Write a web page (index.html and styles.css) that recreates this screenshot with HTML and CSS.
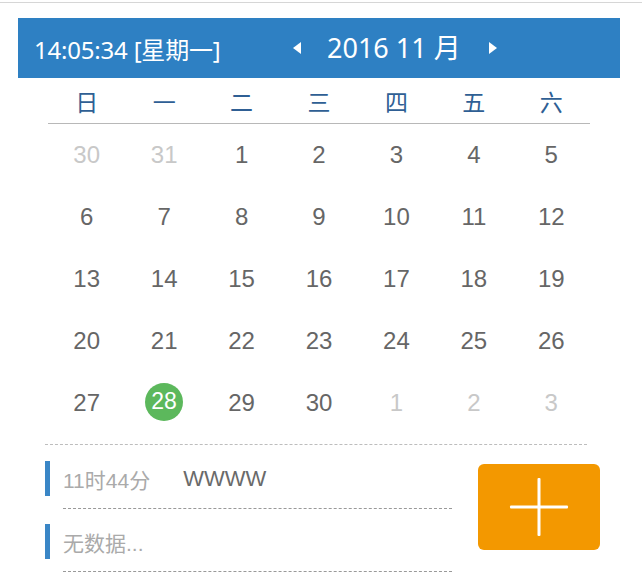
FILE: index.html
```html
<!DOCTYPE html>
<html lang="zh-CN">
<head>
<meta charset="utf-8">
<title>日历</title>
<link rel="stylesheet" href="styles.css">
</head>
<body>
<div class="page">
  <header class="cal-header">
    <div class="clock">14:05:34 [星期一]</div>
    <div class="nav">
      <span class="arrow arrow-left"></span>
      <span class="month">2016 11 月</span>
      <span class="arrow arrow-right"></span>
    </div>
  </header>
  <div class="calendar">
    <div class="weekdays">
      <span>日</span><span>一</span><span>二</span><span>三</span><span>四</span><span>五</span><span>六</span>
    </div>
    <div class="days">
      <span class="day other">30</span><span class="day other">31</span><span class="day">1</span><span class="day">2</span><span class="day">3</span><span class="day">4</span><span class="day">5</span>
      <span class="day">6</span><span class="day">7</span><span class="day">8</span><span class="day">9</span><span class="day">10</span><span class="day">11</span><span class="day">12</span>
      <span class="day">13</span><span class="day">14</span><span class="day">15</span><span class="day">16</span><span class="day">17</span><span class="day">18</span><span class="day">19</span>
      <span class="day">20</span><span class="day">21</span><span class="day">22</span><span class="day">23</span><span class="day">24</span><span class="day">25</span><span class="day">26</span>
      <span class="day">27</span><span class="day today"><span class="dot">28</span></span><span class="day">29</span><span class="day">30</span><span class="day other">1</span><span class="day other">2</span><span class="day other">3</span>
    </div>
  </div>
  <div class="separator"></div>
  <div class="events">
    <div class="event-list">
      <div class="item">
        <div class="item-head">
          <span class="bar"></span>
          <span class="time">11时44分</span>
          <span class="title">WWWW</span>
        </div>
        <div class="item-line"></div>
      </div>
      <div class="item">
        <div class="item-head">
          <span class="bar"></span>
          <span class="time">无数据...</span>
        </div>
        <div class="item-line"></div>
      </div>
    </div>
    <button class="add-btn" type="button" aria-label="添加">
      <svg width="60" height="60" viewBox="0 0 60 60">
        <rect x="1" y="28.5" width="58" height="3" rx="1" fill="#fff"/>
        <rect x="28.5" y="1" width="3" height="58" rx="1" fill="#fff"/>
      </svg>
    </button>
  </div>
</div>
</body>
</html>
```

FILE: styles.css
```css
html, body {
  margin: 0;
  padding: 0;
  background: #fff;
}

body {
  padding-top: 2px;
  font-family: "Liberation Sans", Arial, "Noto Sans CJK SC", sans-serif;
}

.page {
  border-top: 1px solid #d6d6d6;
  padding: 15px 22px 0 18px;
}

.cal-header {
  height: 60px;
  background: #2e80c3;
  color: #fff;
  display: grid;
  grid-template-columns: 259px auto;
  align-items: center;
  padding-left: 16px;
  font-family: "Noto Sans", "Open Sans", "Noto Sans CJK SC", sans-serif;
}

.clock {
  font-size: 24px;
  white-space: nowrap;
  letter-spacing: -0.2px;
}

.nav {
  display: flex;
  align-items: center;
}

.month {
  font-size: 27px;
  margin: 0 28px 0 26px;
  white-space: nowrap;
  line-height: 1;
  padding-bottom: 2px;
}

.arrow {
  width: 0;
  height: 0;
  border-top: 6px solid transparent;
  border-bottom: 6px solid transparent;
}

.arrow-left {
  border-right: 8px solid #fff;
}

.arrow-right {
  border-left: 8px solid #fff;
}

.calendar {
  margin: 0 30px;
}

.weekdays {
  display: grid;
  grid-template-columns: repeat(7, 1fr);
  height: 45px;
  align-items: center;
  border-bottom: 1px solid #b8b8b8;
  font-family: "Noto Sans CJK SC", sans-serif;
  font-size: 23px;
  color: #2f5f94;
  text-align: center;
}

.weekdays span {
  line-height: 1;
  padding-top: 1px;
}

.days {
  display: grid;
  grid-template-columns: repeat(7, 1fr);
  grid-auto-rows: 62px;
}

.day {
  display: flex;
  align-items: center;
  justify-content: center;
  font-size: 24px;
  color: #666;
}

.day.other {
  color: #c8c8c8;
}

.dot {
  width: 38px;
  height: 38px;
  border-radius: 50%;
  background: #5cb85c;
  color: #fff;
  display: flex;
  align-items: center;
  justify-content: center;
  font-size: 23px;
  margin-top: -3px;
}

.separator {
  margin: 10px 33px 0 27px;
  border-top: 1px dashed #bdbdbd;
}

.events {
  display: flex;
  align-items: flex-start;
  margin: 0 20px 0 27px;
}

.event-list {
  width: 407px;
  padding-top: 1px;
}

.item {
  padding-top: 15px;
}

.item-head {
  height: 35px;
  display: flex;
  align-items: center;
}

.bar {
  width: 5px;
  height: 35px;
  background: #3a86c6;
  flex: none;
}

.time {
  margin-left: 13px;
  font-size: 21px;
  color: #aaa;
}

.title {
  margin-left: 33px;
  font-size: 22px;
  color: #6a6a6a;
}

.item-line {
  margin: 12px 0 0 18px;
  border-top: 1px dashed #999;
}

.add-btn {
  margin: 19px 0 0 26px;
  width: 122px;
  height: 86px;
  border: none;
  border-radius: 6px;
  background: #f39800;
  padding: 0;
  display: flex;
  align-items: center;
  justify-content: center;
  cursor: pointer;
}

.add-btn svg {
  display: block;
}
```
